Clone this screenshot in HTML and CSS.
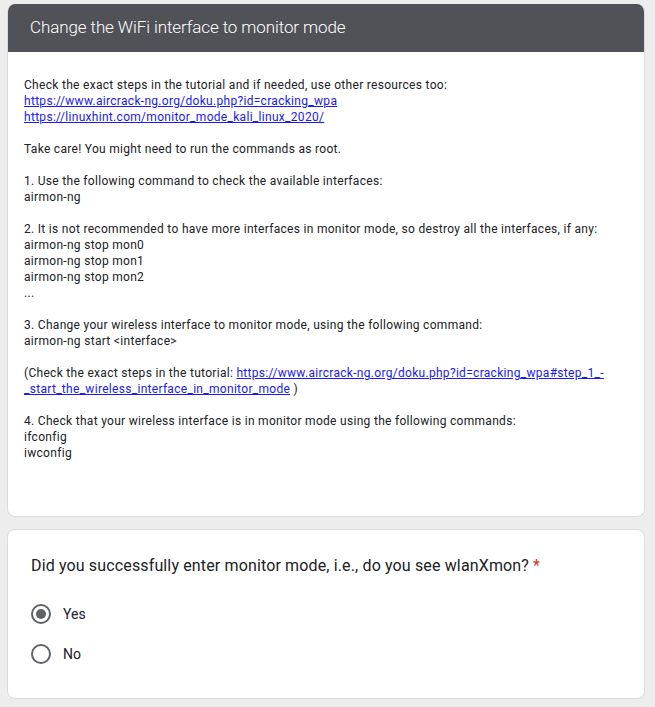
FILE: index.html
```html
<!DOCTYPE html>
<html>
<head>
<meta charset="utf-8">
<link rel="stylesheet" href="styles.css">
</head>
<body>
<div class="page">
  <section class="card section-card">
    <div class="section-header">Change the WiFi interface to monitor mode</div>
    <div class="section-body">
      <div>Check the exact steps in the tutorial and if needed, use other resources too:</div>
      <div><a href="#">https://www.aircrack-ng.org/doku.php?id=cracking_wpa</a></div>
      <div><a href="#">https://linuxhint.com/monitor_mode_kali_linux_2020/</a></div>
      <div class="blank"></div>
      <div>Take care! You might need to run the commands as root.</div>
      <div class="blank"></div>
      <div>1. Use the following command to check the available interfaces:</div>
      <div>airmon-ng</div>
      <div class="blank"></div>
      <div>2. It is not recommended to have more interfaces in monitor mode, so destroy all the interfaces, if any:</div>
      <div>airmon-ng stop mon0</div>
      <div>airmon-ng stop mon1</div>
      <div>airmon-ng stop mon2</div>
      <div>...</div>
      <div class="blank"></div>
      <div>3. Change your wireless interface to monitor mode, using the following command:</div>
      <div>airmon-ng start &lt;interface&gt;</div>
      <div class="blank"></div>
      <div>(Check the exact steps in the tutorial: <a href="#">https://www.aircrack-ng.org/doku.php?id=cracking_wpa#step_1_-<br>_start_the_wireless_interface_in_monitor_mode</a> )</div>
      <div class="blank"></div>
      <div>4. Check that your wireless interface is in monitor mode using the following commands:</div>
      <div>ifconfig</div>
      <div>iwconfig</div>
    </div>
  </section>
  <section class="card question-card">
    <div class="question">Did you successfully enter monitor mode, i.e., do you see wlanXmon? <span class="req">*</span></div>
    <div class="options">
      <label class="option"><span class="radio checked"></span><span>Yes</span></label>
      <label class="option"><span class="radio"></span><span>No</span></label>
    </div>
  </section>
</div>
</body>
</html>
```
FILE: styles.css
```css
html, body {
  margin: 0;
  padding: 0;
  background: #ededed;
}
body {
  font-family: Roboto, "Liberation Sans", sans-serif;
  color: #202124;
}
.page {
  padding: 4px 10px 10px 7px;
  display: flex;
  flex-direction: column;
  gap: 12px;
}
.card {
  background: #fff;
  border: 1px solid #dadce0;
  border-radius: 8px;
  overflow: hidden;
}
.section-card {
  border-top: none;
}
.section-header {
  background: #515257;
  color: #fff;
  font-size: 17px;
  font-weight: 300;
  letter-spacing: -0.1px;
  height: 48px;
  line-height: 47px;
  padding-left: 22px;
}
.section-body {
  padding: 25px 16px 55px 16px;
  font-size: 12px;
  line-height: 16px;
  letter-spacing: 0.3px;
}
.blank {
  height: 16px;
}
a {
  color: #1a1aee;
  text-decoration: underline;
}
.question-card {
  padding: 24px 23px 24px 23px;
  height: 120px;
}
.question {
  font-size: 16px;
  line-height: 24px;
  letter-spacing: 0.14px;
}
.req {
  color: #d93025;
}
.options {
  margin-top: 24px;
  display: flex;
  flex-direction: column;
  gap: 16px;
}
.option {
  display: flex;
  align-items: center;
  gap: 12px;
  font-size: 14px;
  height: 24px;
}
.radio {
  width: 16px;
  height: 16px;
  border: 2px solid #5f6368;
  border-radius: 50%;
  display: flex;
  align-items: center;
  justify-content: center;
  flex: none;
}
.radio.checked::after {
  content: "";
  width: 10px;
  height: 10px;
  border-radius: 50%;
  background: #5f6368;
}
```
